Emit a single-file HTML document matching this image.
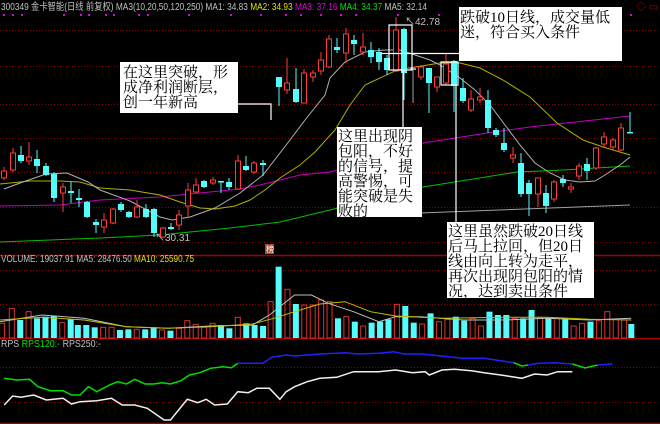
<!DOCTYPE html>
<html><head><meta charset="utf-8">
<style>
html,body{margin:0;padding:0;background:#000;width:660px;height:424px;overflow:hidden}
svg{display:block}
.b{font-family:"Liberation Serif","Noto Serif CJK SC",serif;font-size:15px;fill:#000}
.h{font-family:"Liberation Sans","Noto Sans CJK SC",sans-serif;font-size:10px}
</style></head><body>
<svg id="s" width="660" height="424" xmlns="http://www.w3.org/2000/svg">
<rect width="660" height="424" fill="#000"/>
<g id="grid"></g>
<g id="ma"></g>
<g id="cd"></g>
<g id="vol"></g>
<g id="rps"></g>
<text class="h" x="1" y="10" fill="#c0c0c0" textLength="426" lengthAdjust="spacingAndGlyphs">300349 金卡智能(日线 前复权) MA3(10,20,50,120,250) MA1: 34.83 <tspan fill="#e0e000">MA2: 34.93</tspan> <tspan fill="#e000e0">MA3: 37.16</tspan> <tspan fill="#00e000">MA4: 34.37</tspan> MA5: 32.14</text>
<text class="h" x="636" y="10" fill="#c00000">◇ ▭</text>
<text class="h" x="405" y="25" fill="#c0c0c0">↖42.78</text>
<text class="h" x="155" y="241" fill="#c0c0c0">↖30.31</text>
<rect x="265" y="244" width="9" height="10" fill="#a05030"/>
<text x="266" y="252" font-size="8" fill="#fff" font-family="Noto Sans CJK SC,sans-serif">榜</text>
<text class="h" x="1" y="262" fill="#c0c0c0" textLength="193" lengthAdjust="spacingAndGlyphs">VOLUME: 19037.91 MA5: 28476.50 <tspan fill="#e0e000">MA10: 25590.75</tspan></text>
<text class="h" x="1" y="347" fill="#c0c0c0" textLength="100" lengthAdjust="spacingAndGlyphs">RPS <tspan fill="#00e000">RPS120:-</tspan>  RPS250:-</text>
<g stroke="#fff" stroke-width="1.2" fill="none">
<polyline points="238,104 271,104 271,120"/>
<rect x="389" y="25" width="23" height="45"/>
<rect x="441" y="62" width="17" height="23"/>
<line x1="380" y1="53.5" x2="459" y2="53.5"/>
<line x1="403" y1="70" x2="403" y2="127"/>
<line x1="456" y1="85" x2="456" y2="222"/>
</g>
<rect x="120" y="62" width="118" height="51" fill="#fff"/>
<text class="b"><tspan x="123" y="77">在这里突破，形</tspan><tspan x="123" y="92">成净利润断层，</tspan><tspan x="123" y="107">创一年新高</tspan></text>
<rect x="337" y="127" width="85" height="90" fill="#fff"/>
<text class="b"><tspan x="338" y="141">这里出现阴</tspan><tspan x="338" y="156">包阳，不好</tspan><tspan x="338" y="171">的信号，提</tspan><tspan x="338" y="186">高警惕，可</tspan><tspan x="338" y="201">能突破是失</tspan><tspan x="338" y="216">败的</tspan></text>
<rect x="459" y="7" width="163" height="54" fill="#fff"/>
<text class="b"><tspan x="460" y="22">跌破10日线，成交量低</tspan><tspan x="460" y="37">迷，符合买入条件</tspan></text>
<rect x="447" y="222" width="147" height="76" fill="#fff"/>
<text class="b"><tspan x="448" y="236">这里虽然跌破20日线</tspan><tspan x="448" y="251">后马上拉回，但20日</tspan><tspan x="448" y="266">线由向上转为走平，</tspan><tspan x="448" y="281">再次出现阴包阳的情</tspan><tspan x="448" y="296">况，达到卖出条件</tspan></text>
</svg>
<script>
var NS="http://www.w3.org/2000/svg";
function el(p,t,a){var e=document.createElementNS(NS,t);for(var k in a)e.setAttribute(k,a[k]);document.getElementById(p).appendChild(e);return e;}
[30,66,104,138,172,207,242,270,304,367,402].forEach(function(y){el('grid','line',{x1:0,x2:660,y1:y+.5,y2:y+.5,stroke:'#8a0000','stroke-dasharray':'1,2'});});
[255,338,423].forEach(function(y){el('grid','line',{x1:0,x2:660,y1:y+.5,y2:y+.5,stroke:'#a00000','stroke-width':1.5});});
[3,12,21,63,80,88,105,113,138,147,188,230,260,285,300,320,340,355,397,438,490,515,540,565,600,630].forEach(function(x){el('grid','rect',{x:x,y:14,width:2,height:2,fill:'#e000e0'});});
function pl(g,pts,c,w){el(g,'polyline',{points:pts.map(function(p){return p.join(',')}).join(' '),fill:'none',stroke:c,'stroke-width':w||1});}
pl('ma',[[0,242],[100,238],[160,235],[190,232],[230,228],[280,222],[330,210],[423,187],[517,172],[563,170],[630,166]],'#00c000');
pl('ma',[[0,206],[60,205],[100,200],[160,197],[200,193],[240,189],[260,185],[280,180],[300,175],[330,172],[423,143],[487,133],[530,127],[630,116]],'#c000c0');
pl('ma',[[0,184],[30,181],[60,181],[80,182],[100,188],[130,190],[160,195],[180,202],[200,208],[215,209],[235,206],[250,200],[265,190],[280,178],[300,165],[315,152],[335,130],[350,105],[365,85],[397,70],[440,63],[460,63],[480,68],[503,80],[530,97],[557,123],[583,140],[603,147],[630,155]],'#b0b000');
pl('ma',[[4,189],[20,183],[46,174],[67,173],[88,182],[100,190],[130,201],[160,217],[172,220],[190,217],[215,208],[240,193],[263,175],[290,140],[305,120],[313,110],[325,95],[330,78],[345,62],[365,52],[385,50],[400,50],[415,55],[430,60],[440,65],[460,78],[475,90],[490,105],[505,125],[520,145],[535,163],[550,173],[565,180],[580,182],[595,181],[605,175],[620,165],[630,157]],'#b0b0b0');
pl('ma',[[420,213],[630,205]],'#a0a0a0');
var C=[[4,171,178,167,180,'r'],[13,153,170,148,172,'r'],[21,155,161,146,163,'c'],[29,157,161,142,165,'r'],[37,159,166,150,173,'c'],[46,166,175,163,176,'c'],[54,174,198,172,202,'c'],[63,187,193,183,212,'r'],[71,191,193,182,203,'c'],[79,198,200,189,207,'c'],[87,202,217,201,218,'c'],[96,222,225,219,233,'c'],[104,220,227,213,233,'r'],[113,209,223,208,224,'r'],[121,204,210,202,212,'c'],[129,212,217,211,218,'c'],[137,207,217,200,218,'r'],[146,209,217,204,218,'c'],[154,209,233,208,237,'c'],[163,228,237,227,238,'r'],[171,227,229,223,230,'c'],[179,215,225,210,230,'r'],[188,190,206,183,218,'r'],[196,185,192,178,193,'r'],[204,181,187,180,188,'c'],[213,180,183,177,185,'r'],[221,181,182,181,193,'c'],[229,182,187,178,190,'c'],[238,161,189,155,190,'r'],[246,166,170,156,171,'c'],[254,163,172,161,174,'r'],[263,163,165,160,176,'c'],
[279,77,87,77,106,'c'],[287,83,90,58,94,'r'],[296,89,102,68,103,'c'],[304,73,103,69,103,'r'],[313,73,77,70,82,'r'],[321,60,71,52,75,'r'],[329,39,67,35,68,'r'],[337,47,50,38,53,'c'],[346,34,53,28,63,'r'],[354,40,44,35,55,'c'],[363,47,52,33,55,'r'],[371,50,57,42,63,'c'],[379,52,62,48,70,'c'],[387,58,70,55,75,'c'],[396,30,71,17,72,'r'],[404,29,73,28,100,'c'],[413,68,70,68,103,'g'],[421,67,77,65,80,'r'],[429,68,83,68,113,'c'],[437,77,87,77,92,'r'],[446,64,83,53,85,'r'],[454,61,86,60,112,'c'],[463,88,101,78,103,'c'],[471,99,110,90,112,'r'],[480,97,100,88,103,'r'],[488,100,128,90,133,'c'],[496,130,135,128,137,'c'],[504,143,150,128,152,'c'],[513,155,158,147,163,'r'],[521,163,194,153,197,'c'],[529,183,194,180,216,'c'],[538,178,194,178,207,'r'],[546,193,206,185,213,'c'],[554,182,199,180,202,'r'],[563,179,183,175,187,'c'],[571,187,189,183,193,'r'],[579,166,176,163,180,'r'],[587,164,171,158,180,'c'],[596,148,168,147,170,'r'],[604,137,144,132,147,'r'],[613,140,147,138,150,'r'],[621,128,150,123,151,'r'],[630,132,133,112,133,'c']];
C.forEach(function(d){var col=d[5]=='r'?'#ff3c3c':d[5]=='c'?'#54fcfc':'#a0a0a0';
el('cd','line',{x1:d[0],x2:d[0],y1:d[3],y2:d[4],stroke:col});
if(d[5]=='r')el('cd','rect',{x:d[0]-2.5,y:d[1],width:5,height:Math.max(d[2]-d[1],1),fill:'#000',stroke:col});
else el('cd','rect',{x:d[0]-3,y:d[1],width:6,height:Math.max(d[2]-d[1],1.5),fill:col});});
var V=[[5,250,'r'],[28,205,'r'],[48,240,'c'],[68,215,'r'],[88,235,'c'],[108,230,'c'],[128,228,'c'],[148,248,'r'],[168,238,'c'],[185,255,'c'],[205,255,'c'],[225,262,'c'],[245,262,'r'],[265,262,'r'],[285,270,'c'],[305,268,'c'],[325,268,'r'],[345,268,'c'],[365,262,'c'],[385,270,'r'],[405,272,'c'],[425,265,'r'],[445,242,'r'],[465,253,'r'],[485,262,'r'],[505,250,'r'],[525,255,'c'],[545,265,'c'],[565,232,'r'],[585,250,'c'],[605,255,'c'],[625,258,'c'],[643,185,'r'],[662,80,'c'],[683,148,'r'],[703,192,'c'],[723,195,'r'],[743,195,'r'],[763,180,'r'],[783,185,'r'],[803,235,'c'],[823,230,'r'],[843,245,'c'],[863,258,'r'],[883,248,'c'],[903,245,'c'],[923,238,'c'],[943,193,'r'],[963,198,'c'],[983,248,'c'],[1003,252,'r'],[1023,220,'c'],[1043,245,'r'],[1063,238,'r'],[1083,230,'c'],[1103,242,'c'],[1123,235,'r'],[1143,258,'r'],[1163,215,'c'],[1183,225,'c'],[1203,225,'c'],[1223,235,'r'],[1243,235,'c'],[1263,210,'c'],[1283,232,'r'],[1303,235,'c'],[1323,235,'r'],[1343,238,'c'],[1363,258,'r'],[1383,250,'r'],[1403,245,'c'],[1423,242,'r'],[1443,215,'r'],[1463,238,'r'],[1483,240,'r'],[1500,252,'c']];
V.forEach(function(d){var x=d[0]/2.376,y=d[1]/3+240;
if(d[2]=='r')el('vol','rect',{x:x-2.5,y:y,width:5,height:338-y,fill:'none',stroke:'#e03030'});
else el('vol','rect',{x:x-3,y:y,width:6,height:338-y,fill:'#54fcfc'});});
function zp(a){return a.map(function(p){return [(p[0]/2.376).toFixed(1),(p[1]/3+240).toFixed(1)];});}
pl('vol',zp([[0,245],[100,225],[200,235],[300,260],[400,265],[500,258],[600,255],[640,225],[700,165],[740,165],[780,190],[840,215],[900,245],[940,230],[1000,230],[1100,240],[1200,240],[1300,235],[1400,240],[1500,235]]),'#c0c0c0');
pl('vol',zp([[0,240],[100,232],[200,240],[300,260],[400,265],[500,260],[600,252],[650,235],[700,215],[760,192],[820,185],[880,215],[940,228],[1050,235],[1200,232],[1300,232],[1400,238],[1500,240]]),'#c0c000');
pl('rps',zp([[10,415],[40,420],[70,418],[90,440],[120,452],[150,452],[170,465],[190,465],[210,440],[230,455],[260,435],[280,425],[300,432],[320,418],[345,432],[365,432],[385,428],[405,432],[430,422],[450,405],[475,398],[500,385],[530,380],[550,383],[565,370]]),'#00e000',1.5);
pl('rps',zp([[565,370],[600,370],[625,370],[645,352],[680,345],[700,348],[730,345],[760,342],[800,340],[820,338],[850,342],[900,340],[935,335],[960,342],[1000,342],[1050,348],[1100,355],[1150,355],[1190,362],[1220,368]]),'#2020ff',1.5);
pl('rps',zp([[1220,368],[1240,378],[1255,375]]),'#00e000',1.5);
pl('rps',zp([[1255,375],[1280,370],[1320,368],[1360,372]]),'#2020ff',1.5);
pl('rps',zp([[1360,372],[1390,384],[1410,378],[1420,375]]),'#00e000',1.5);
pl('rps',zp([[1420,375],[1455,372]]),'#2020ff',1.5);
pl('rps',zp([[10,495],[30,468],[50,472],[80,465],[110,480],[150,475],[170,492],[190,485],[230,482],[265,475],[290,495],[320,495],[350,505],[390,540],[405,540],[445,478],[470,488],[490,478],[510,495],[540,492],[565,455],[590,458],[610,445],[640,445],[665,478],[680,455],[700,440],[730,425],[760,415],[800,412],[840,395],[900,395],[940,390],[980,398],[1010,395],[1020,405],[1050,390],[1080,388],[1120,392],[1150,398],[1190,405],[1240,415],[1270,402],[1300,405],[1325,395],[1360,395]]),'#f0f0f0',1.5);
</script>
</body></html>
